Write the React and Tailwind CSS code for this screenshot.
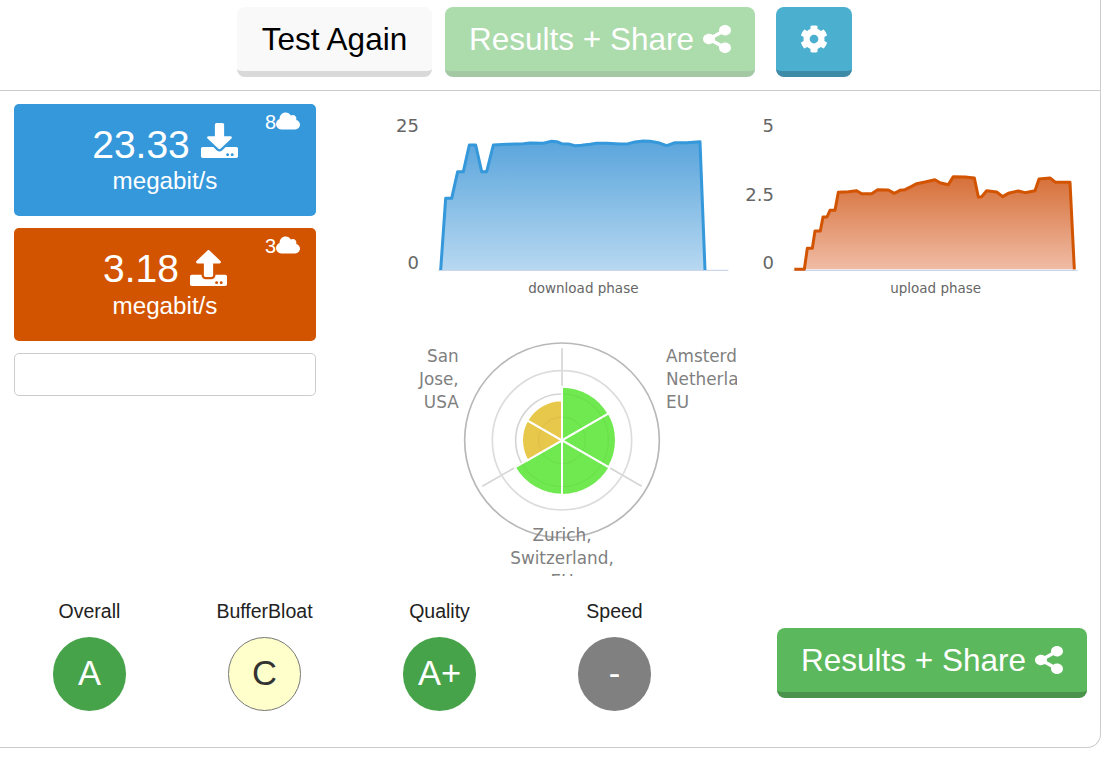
import { FaCloud, FaCog, FaDownload, FaShareAlt, FaUpload } from 'react-icons/fa'

const chartFont = { fontFamily: '"DejaVu Sans", sans-serif' }

const downloadLine = '182,495 197,280 215,280 233,200 250,200 268,120 287,120 305,200 320,200 340,120 380,118 430,116 450,114 490,115 515,109 530,110 545,116 565,117 585,122 605,121 630,118 650,115 680,115 720,117 745,116 765,111 790,108 810,109 835,113 860,122 885,113 920,113 960,110 975,495'
const uploadLine = '178,493 208,493 217,430 232,430 240,378 256,378 264,336 276,336 285,316 300,316 310,262 340,260 365,257 380,266 410,266 428,254 460,255 478,265 495,256 510,254 530,244 545,236 570,231 600,224 615,233 640,239 655,215 690,216 718,219 730,276 740,275 755,257 785,261 803,275 820,265 850,258 870,263 900,257 912,222 945,219 962,232 1005,232 1018,493'

function Chart({ id, width, line, stroke, top, bottom, ticks, label, labelX, baseEnd }) {
  return (
    <svg viewBox={`0 0 ${width} 600`} className="block shrink-0 h-[200px]" style={{ width: width / 3 }}>
      <defs>
        <linearGradient id={id} x1="0" y1="0" x2="0" y2="1">
          <stop offset="0%" stopColor={top} />
          <stop offset="100%" stopColor={bottom} />
        </linearGradient>
      </defs>
      <polygon points={line} fill={`url(#${id})`} />
      <line x1="175" y1="496" x2={baseEnd} y2="496" stroke="#ccd6eb" strokeWidth="4" />
      <polyline points={line} fill="none" stroke={stroke} strokeWidth="9" strokeLinejoin="round" />
      {ticks.map(t => (
        <text key={t.text} x="117" y={t.y} textAnchor="end" fontSize="54" fill="#666" style={chartFont}>{t.text}</text>
      ))}
      <text x={labelX} y="563" textAnchor="middle" fontSize="40.5" fill="#666" style={chartFont}>{label}</text>
    </svg>
  )
}

function wedge(from, to, r) {
  const cx = 456, cy = 316
  const pt = deg => {
    const a = (deg - 90) * Math.PI / 180
    return `${(cx + r * Math.cos(a)).toFixed(1)} ${(cy + r * Math.sin(a)).toFixed(1)}`
  }
  return `M${cx} ${cy} L${pt(from)} A${r} ${r} 0 0 1 ${pt(to)} Z`
}

function Radar() {
  const wedges = [
    [0, 60, 161, '#6fe94f'],
    [60, 120, 162, '#6fe94f'],
    [120, 180, 164, '#6fe94f'],
    [180, 240, 163, '#6fe94f'],
    [240, 300, 120, '#e8c84a'],
    [300, 360, 120, '#e8c84a'],
  ]
  return (
    <svg viewBox="0 0 981 723" className="block ml-[30px] mt-[30px] w-[327px] h-[241px]" style={chartFont}>
      <line x1="456" y1="316" x2="456" y2="40" stroke="#d5d5d5" strokeWidth="5" />
      <line x1="456" y1="316" x2="695" y2="454" stroke="#d5d5d5" strokeWidth="5" />
      <line x1="456" y1="316" x2="217" y2="454" stroke="#d5d5d5" strokeWidth="5" />
      <circle cx="456" cy="316" r="209" fill="none" stroke="#dcdcdc" strokeWidth="5" />
      <circle cx="456" cy="316" r="139" fill="none" stroke="#dcdcdc" strokeWidth="5" />
      {wedges.map(([from, to, r, fill]) => (
        <path key={from} d={wedge(from, to, r)} fill={fill} stroke="#fff" strokeWidth="6" />
      ))}
      <circle cx="456" cy="316" r="139" fill="none" stroke="#000" strokeOpacity="0.035" strokeWidth="4" />
      <circle cx="456" cy="316" r="70" fill="none" stroke="#000" strokeOpacity="0.035" strokeWidth="4" />
      <circle cx="456" cy="316" r="292" fill="none" stroke="#b8b8b8" strokeWidth="5" />
      <g fontSize="50.5" fill="#808080">
        <text x="146" y="81" textAnchor="end">San</text>
        <text x="146" y="150" textAnchor="end">Jose,</text>
        <text x="146" y="218" textAnchor="end">USA</text>
        <text x="768" y="81">Amsterdam,</text>
        <text x="768" y="150">Netherlands,</text>
        <text x="768" y="218">EU</text>
        <text x="456" y="618" textAnchor="middle">Zurich,</text>
        <text x="456" y="688" textAnchor="middle">Switzerland,</text>
        <text x="456" y="757" textAnchor="middle">EU</text>
      </g>
    </svg>
  )
}

function SpeedCard({ value, Icon, count, color, height, iconClass, labelClass }) {
  return (
    <div className={`relative rounded-[5px] text-white flex flex-col items-center pt-[20px] ${height} ${color}`}>
      <div className="flex items-center gap-[11px] h-[40px]">
        <span className="text-[39px] leading-none">{value}</span>
        <Icon preserveAspectRatio="none" className={iconClass} />
      </div>
      <div className={`text-[24.2px] leading-none ${labelClass}`}>megabit/s</div>
      <div className="absolute top-[8px] right-[16px] flex items-center text-[20px] leading-none">
        {count}
        <FaCloud className="w-[24px] h-[20px] -mt-[2px]" />
      </div>
    </div>
  )
}

function Grade({ label, grade, color }) {
  return (
    <div className="w-[175px] flex flex-col items-center">
      <div className="text-[19.5px] leading-[22px] text-[#222]">{label}</div>
      <div className={`mt-[15px] w-[73px] h-[74px] rounded-full flex items-center justify-center text-[34.5px] ${color}`}>{grade}</div>
    </div>
  )
}

function ShareLabel() {
  return (
    <>
      <span className="pt-[2px]">Results + Share</span>
      <FaShareAlt preserveAspectRatio="none" className="w-[28px] h-[28px]" />
    </>
  )
}

export default function App() {
  return (
    <div className="w-[1101px] h-[748px] bg-white border-r border-b border-[#ccc] rounded-br-[14px] text-[#333]" style={{ fontFamily: '"Liberation Sans", Arial, sans-serif' }}>
      <div className="h-[91px] border-b border-[#ccc] pt-[7px] pl-[237px] flex items-start">
        <button className="w-[195px] h-[70px] rounded-[8px] bg-[#f9f9f9] border-b-[6px] border-[#d9d9d9] pt-[2px] text-black text-[31.5px]">Test Again</button>
        <button className="ml-[13px] w-[310px] h-[70px] rounded-[8px] bg-[#5cb85c] border-b-[6px] border-[#4a934a] opacity-50 text-white text-[31.5px] flex items-center justify-center gap-[9px]">
          <ShareLabel />
        </button>
        <button className="ml-[21px] w-[76px] h-[70px] rounded-[8px] bg-[#4bafcf] border-b-[6px] border-[#3d8ba6] text-white flex items-center justify-center">
          <FaCog className="w-[28px] h-[28px]" />
        </button>
      </div>

      <div className="flex pl-[14px] pt-[13px]">
        <div className="w-[302px] flex flex-col gap-[12px]">
          <SpeedCard value="23.33" Icon={FaDownload} count="8" color="bg-[#3498db]" height="h-[112px]" iconClass="w-[37px] h-[35px] -mt-[7px]" labelClass="mt-[5px]" />
          <SpeedCard value="3.18" Icon={FaUpload} count="3" color="bg-[#d35400]" height="h-[113px]" iconClass="w-[37px] h-[36px]" labelClass="mt-[6px]" />
          <div className="h-[43px] border border-[#ccc] rounded-[5px]" />
        </div>
        <div className="ml-[64px] mt-[1px]">
          <div className="flex">
            <Chart id="dl" width={1065} line={downloadLine} stroke="#3498db" top="#5aa5dc" bottom="#b7d8f1" ticks={[{ text: '25', y: 81 }, { text: '0', y: 493 }]} label="download phase" labelX={610} baseEnd={1045} />
            <Chart id="ul" width={1080} line={uploadLine} stroke="#d35400" top="#d66f38" bottom="#f0bca5" ticks={[{ text: '5', y: 81 }, { text: '2.5', y: 288 }, { text: '0', y: 493 }]} label="upload phase" labelX={602} baseEnd={1028} />
          </div>
          <Radar />
        </div>
      </div>

      <div className="flex items-start pl-[2px] pt-[24px]">
        <Grade label="Overall" grade="A" color="bg-[#47a34a] text-white" />
        <Grade label="BufferBloat" grade="C" color="bg-[#ffffcc] border border-[#777] text-[#333]" />
        <Grade label="Quality" grade="A+" color="bg-[#47a34a] text-white" />
        <Grade label="Speed" grade="-" color="bg-[#808080] text-white" />
        <button className="ml-[75px] mt-[28px] w-[310px] h-[70px] rounded-[8px] bg-[#5cb85c] border-b-[6px] border-[#4a934a] text-white text-[31.5px] flex items-center justify-center gap-[9px]">
          <ShareLabel />
        </button>
      </div>
    </div>
  )
}
